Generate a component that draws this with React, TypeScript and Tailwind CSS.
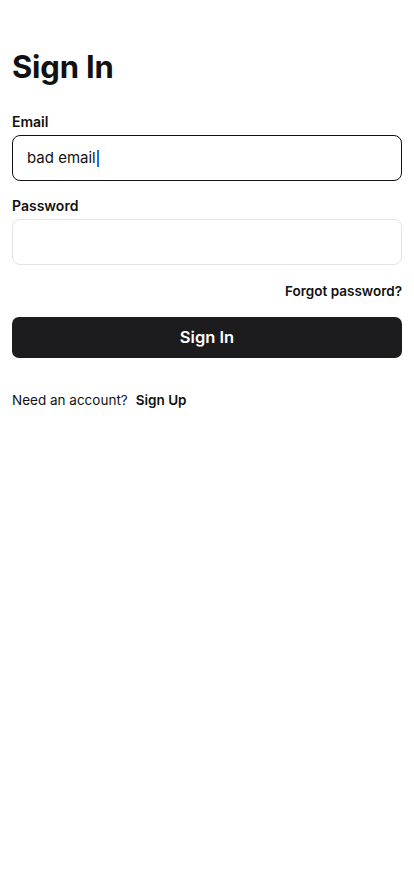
import React from "react";

// Écran de connexion simple
const App: React.FC = () => {
  return (
    <div className="min-h-screen bg-white px-3 pt-[46px] font-['Inter',sans-serif] text-[#111]">
      <h1 className="text-[31px] font-bold leading-[42px] tracking-[-0.2px]">Sign In</h1>

      <div className="mt-[25px]">
        <label className="block text-[14px] font-semibold leading-[18px]">Email</label>
        <div className="mt-[4px] flex h-[46px] items-center rounded-[8px] border border-[#111] px-[14px] text-[15px]">
          <span>bad email</span>
          <span className="ml-[1px] inline-block h-[17px] w-[2px] bg-[#1a73e8]" />
        </div>
      </div>

      <div className="mt-[16px]">
        <label className="block text-[14px] font-semibold leading-[18px]">Password</label>
        <div className="mt-[4px] h-[46px] rounded-[8px] border border-[#e3e3e3]" />
      </div>

      <div className="mt-[17px] flex justify-end">
        <span className="text-[13.5px] font-semibold leading-[18px]">Forgot password?</span>
      </div>

      <button className="mt-[17px] flex h-[41px] w-full items-center justify-center rounded-[7px] bg-[#1c1c1e] text-[16.5px] font-semibold text-white">
        Sign In
      </button>

      <p className="mt-[33px] text-[13.5px] leading-[18px]">
        Need an account?<span className="ml-[8px] font-semibold">Sign Up</span>
      </p>
    </div>
  );
};

export default App;
